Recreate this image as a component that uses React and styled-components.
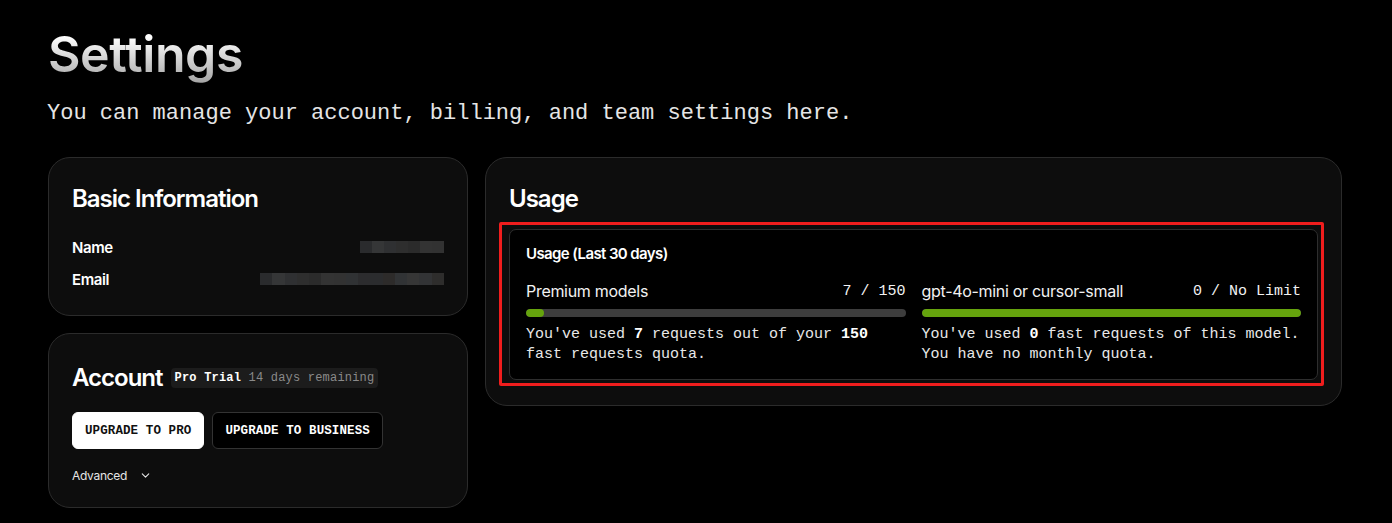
import React from 'react'
import styled, { createGlobalStyle } from 'styled-components'
import { ChevronDown } from 'lucide-react'

const GlobalStyle = createGlobalStyle`
  html, body {
    margin: 0;
    padding: 0;
    background: #000;
    color: #fff;
    font-family: Inter, "Noto Sans", sans-serif;
  }
`

const sans = `Inter, "Noto Sans", sans-serif`
const mono = `"Liberation Mono", "DejaVu Sans Mono", monospace`

// pixelated grays used for the blurred-out personal values
const mosaic = ['#2a2b2d', '#323335', '#2d2b2a', '#303234', '#2b2b2b', '#353637', '#2e2d2c', '#313335', '#2c2c2e', '#333333', '#2f3032', '#2d2c2b', '#363636', '#2b2c2e', '#323232', '#2e2e2e']

function mosaicGradient(cells) {
  const step = 100 / cells
  const stops = []
  for (let i = 0; i < cells; i++) {
    const c = mosaic[(i * 5) % mosaic.length]
    stops.push(`${c} ${i * step}%`, `${c} ${(i + 1) * step}%`)
  }
  return `linear-gradient(90deg, ${stops.join(', ')})`
}

const usage = [
  {
    label: 'Premium models',
    used: 7,
    limit: 150,
    count: '7 / 150',
    note: (
      <>
        You've used <b>7</b> requests out of your <b>150</b> fast requests quota.
      </>
    )
  },
  {
    label: 'gpt-4o-mini or cursor-small',
    used: 1,
    limit: 1,
    count: '0 / No Limit',
    note: (
      <>
        You've used <b>0</b> fast requests of this model. You have no monthly quota.
      </>
    )
  }
]

function App() {
  return (
    <Page>
      <GlobalStyle />
      <Title>Settings</Title>
      <Subtitle>You can manage your account, billing, and team settings here.</Subtitle>

      <Grid>
        <Column>
          <Card>
            <CardTitle>Basic Information</CardTitle>
            <InfoList>
              <InfoRow>
                <InfoLabel>Name</InfoLabel>
                <Redacted $width={84} style={{ background: mosaicGradient(7) }} />
              </InfoRow>
              <InfoRow>
                <InfoLabel>Email</InfoLabel>
                <Redacted $width={184} style={{ background: mosaicGradient(15) }} />
              </InfoRow>
            </InfoList>
          </Card>

          <Card>
            <AccountHeader>
              <CardTitle>Account</CardTitle>
              <Badge>
                <b>Pro Trial</b> <span>14 days remaining</span>
              </Badge>
            </AccountHeader>
            <Buttons>
              <Button $primary>UPGRADE TO PRO</Button>
              <Button>UPGRADE TO BUSINESS</Button>
            </Buttons>
            <Advanced>
              Advanced
              <ChevronDown size={13} strokeWidth={2} />
            </Advanced>
          </Card>
        </Column>

        <UsageCard>
          <CardTitle>Usage</CardTitle>
          <UsageBox>
            <UsageHeading>Usage (Last 30 days)</UsageHeading>
            <UsageGrid>
              {usage.map((u) => (
                <UsageItem key={u.label}>
                  <UsageTop>
                    <UsageLabel>{u.label}</UsageLabel>
                    <UsageCount>{u.count}</UsageCount>
                  </UsageTop>
                  <Track>
                    <Fill style={{ width: `${(u.used / u.limit) * 100}%` }} />
                  </Track>
                  <UsageNote>{u.note}</UsageNote>
                </UsageItem>
              ))}
            </UsageGrid>
          </UsageBox>
        </UsageCard>
      </Grid>
    </Page>
  )
}

const Page = styled.div`
  padding: 24px 50px 20px 48px;
`

const Title = styled.h1`
  margin: 0;
  font-family: ${sans};
  font-size: 50px;
  line-height: 60px;
  font-weight: 600;
  letter-spacing: -0.4px;
  background: linear-gradient(180deg, #ffffff 20%, #a3a3a3 100%);
  -webkit-background-clip: text;
  background-clip: text;
  color: transparent;
  width: fit-content;
`

const Subtitle = styled.p`
  margin: 16px 0 0 -1px;
  font-family: ${mono};
  font-size: 22px;
  line-height: 28px;
  color: #e5e5e5;
`

const Grid = styled.div`
  display: grid;
  grid-template-columns: 420px 1fr;
  gap: 17px;
  margin-top: 29px;
  align-items: start;
`

const Column = styled.div`
  display: flex;
  flex-direction: column;
  gap: 17px;
`

const Card = styled.div`
  background: #0d0d0d;
  border: 1px solid #2b2b2b;
  border-radius: 22px;
  padding: 25px 23px 24px 23px;
`

const CardTitle = styled.h2`
  margin: 0;
  font-family: ${sans};
  font-size: 24px;
  line-height: 32px;
  font-weight: 600;
  letter-spacing: -1px;
  color: #fff;
`

const InfoList = styled.div`
  display: flex;
  flex-direction: column;
  gap: 8px;
  margin-top: 20px;
`

const InfoRow = styled.div`
  display: flex;
  justify-content: space-between;
  align-items: center;
  height: 24px;
`

const InfoLabel = styled.span`
  font-size: 15px;
  font-weight: 600;
  letter-spacing: -0.4px;
`

const Redacted = styled.span`
  display: block;
  width: ${(p) => p.$width}px;
  height: 12px;
`

const AccountHeader = styled.div`
  display: flex;
  align-items: center;
  gap: 8px;
  margin-top: 3px;
`

const Badge = styled.span`
  font-family: ${mono};
  font-size: 12px;
  line-height: 20px;
  letter-spacing: 0.2px;
  background: #1c1c1c;
  border-radius: 4px;
  padding: 0 4px;
  color: #8a8a8a;
  white-space: pre;

  b {
    color: #fff;
  }
`

const Buttons = styled.div`
  display: flex;
  gap: 8px;
  margin-top: 18px;
`

const Button = styled.button`
  height: 37px;
  padding: 0 12px;
  border-radius: 6px;
  font-family: ${mono};
  font-weight: 700;
  font-size: 12.5px;
  letter-spacing: 0.1px;
  border: 1px solid ${(p) => (p.$primary ? '#fff' : '#333')};
  background: ${(p) => (p.$primary ? '#fff' : '#000')};
  color: ${(p) => (p.$primary ? '#111' : '#fff')};
  cursor: pointer;
`

const Advanced = styled.div`
  display: flex;
  align-items: center;
  gap: 12px;
  margin-top: 18px;
  font-size: 12px;
  letter-spacing: -0.3px;
  color: #e5e5e5;
  height: 16px;
`

const UsageCard = styled(Card)`
  padding-bottom: 25px;
`

const UsageBox = styled.div`
  position: relative;
  margin-top: 14px;
  background: #000;
  border: 1px solid #2e2e2e;
  border-radius: 7px;
  padding: 16px 16px 14px 16px;

  &::after {
    content: '';
    position: absolute;
    top: -8px;
    left: -11px;
    right: -7px;
    bottom: -7px;
    border: 3px solid #f01d1d;
    border-radius: 2px;
    pointer-events: none;
  }
`

const UsageHeading = styled.div`
  font-size: 15px;
  line-height: 16px;
  font-weight: 600;
  letter-spacing: -0.6px;
`

const UsageGrid = styled.div`
  display: grid;
  grid-template-columns: 1fr 1fr;
  gap: 16px;
  margin-top: 17px;
`

const UsageItem = styled.div`
  display: flex;
  flex-direction: column;
`

const UsageTop = styled.div`
  display: flex;
  justify-content: space-between;
  align-items: center;
  height: 24px;
`

const UsageLabel = styled.span`
  font-size: 16px;
  letter-spacing: -0.3px;
  color: #f2f2f2;
`

const UsageCount = styled.span`
  font-family: ${mono};
  font-size: 15px;
  color: #f2f2f2;
`

const Track = styled.div`
  height: 8px;
  border-radius: 4px;
  background: #3d3d3d;
  margin-top: 6px;
  overflow: hidden;
`

const Fill = styled.div`
  height: 100%;
  background: #65a30d;
  border-radius: 4px;
`

const UsageNote = styled.p`
  margin: 8px 0 0;
  font-family: ${mono};
  font-size: 15px;
  line-height: 20px;
  color: #e8e8e8;

  b {
    font-weight: 700;
    color: #fff;
  }
`

export default App
